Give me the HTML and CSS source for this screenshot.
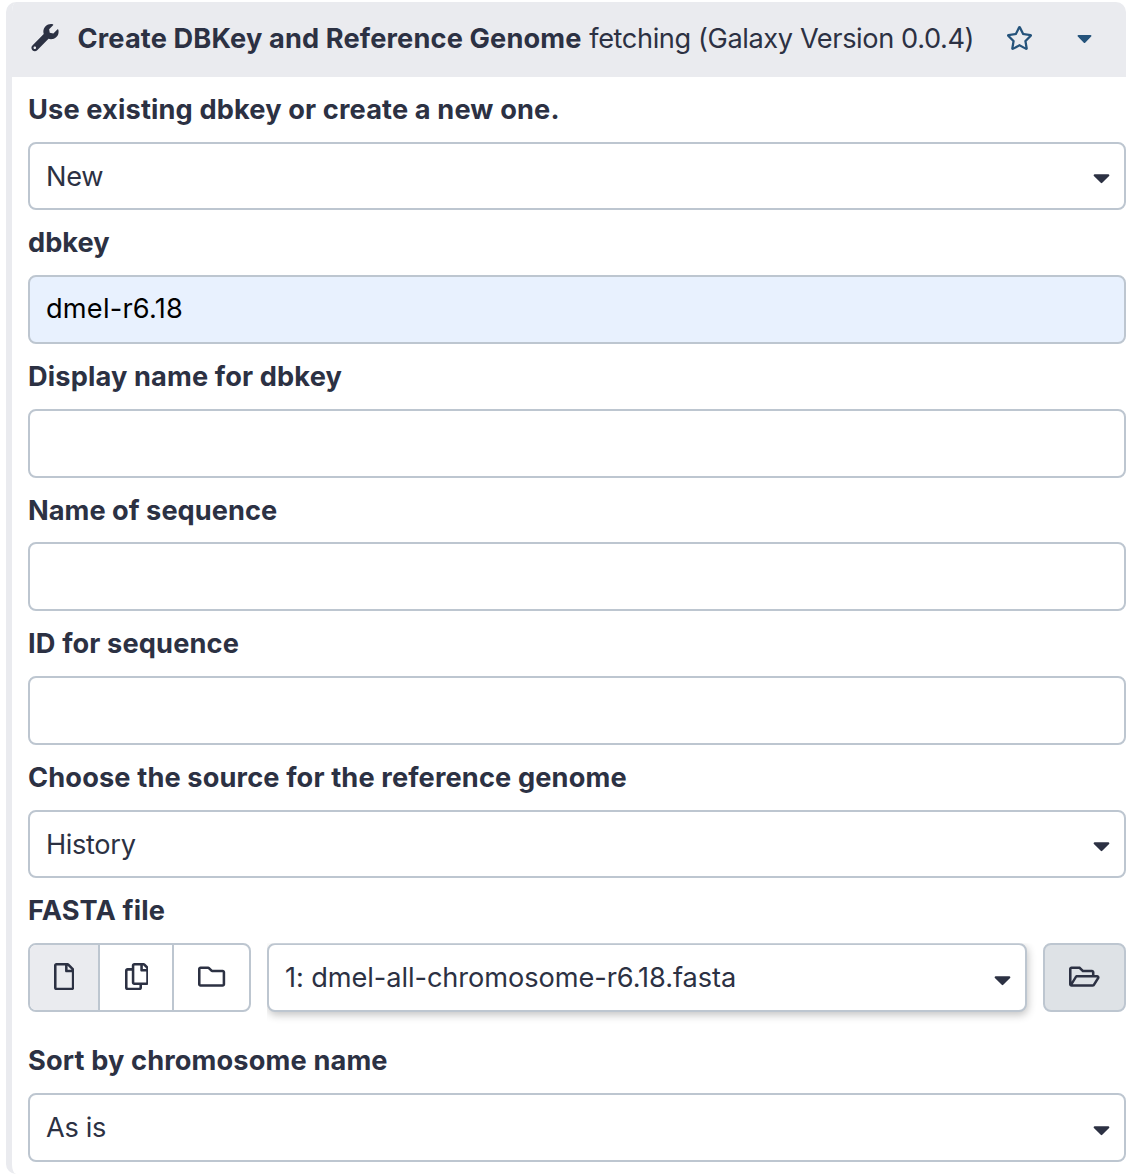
FILE: index.html
```html
<!DOCTYPE html>
<html lang="en">
<head>
<meta charset="utf-8">
<title>Create DBKey and Reference Genome</title>
<link rel="stylesheet" href="styles.css">
</head>
<body>
<svg class="sprite" aria-hidden="true">
  <symbol id="caret" viewBox="0 0 320 512"><path d="M31.3 192h257.3c17.8 0 26.7 21.5 14.1 34.1L174.1 354.8c-7.8 7.8-20.5 7.8-28.3 0L17.2 226.1C4.6 213.5 13.7 192 31.3 192z"/></symbol>
</svg>
<main class="tool">
  <header class="tool-header">
    <svg class="icon wrench" viewBox="0 0 512 512"><path d="M507.73 109.1c-2.24-9.03-13.54-12.09-20.12-5.51l-74.36 74.36-67.88-11.31-11.31-67.88 74.36-74.36c6.62-6.62 3.43-17.9-5.66-20.16-47.38-11.74-99.55.91-136.58 37.93-39.64 39.64-50.55 97.1-34.05 147.2L18.74 402.76c-24.99 24.99-24.99 65.51 0 90.5 24.99 24.99 65.51 24.99 90.5 0l213.21-213.21c50.12 16.71 107.47 5.68 147.37-34.22 37.07-37.07 49.7-89.32 37.91-136.73zM64 472c-13.25 0-24-10.75-24-24 0-13.26 10.75-24 24-24s24 10.74 24 24c0 13.25-10.75 24-24 24z"/></svg>
    <h1 class="tool-title"><b>Create DBKey and Reference Genome</b> <span class="tool-desc">fetching (Galaxy Version 0.0.4)</span></h1>
    <div class="tool-actions">
      <svg class="star" viewBox="0 0 576 512"><path d="M528.1 171.5L382 150.2 316.7 17.8c-11.7-23.6-45.6-23.9-57.4 0L194 150.2 47.9 171.5c-26.2 3.8-36.7 36.1-17.7 54.6l105.7 103-25 145.5c-4.5 26.3 23.2 46 46.4 33.7L288 439.6l130.7 68.7c23.2 12.2 50.9-7.4 46.4-33.7l-25-145.5 105.7-103c19-18.5 8.5-50.8-17.7-54.6zM388.6 312.3l23.7 138.4L288 385.4l-124.3 65.3 23.7-138.4-100.6-98 139-20.2 62.2-126 62.2 126 139 20.2-100.6 98z"/></svg>
      <svg class="menu-caret"><use href="#caret"/></svg>
    </div>
  </header>
  <form class="tool-form">
    <div class="field">
      <div class="label">Use existing dbkey or create a new one.</div>
      <div class="control select"><span>New</span><svg class="caret"><use href="#caret"/></svg></div>
    </div>
    <div class="field">
      <label class="label tight" for="dbkey">dbkey</label>
      <input class="control filled" id="dbkey" type="text" value="dmel-r6.18">
    </div>
    <div class="field">
      <label class="label" for="display">Display name for dbkey</label>
      <input class="control" id="display" type="text">
    </div>
    <div class="field">
      <label class="label tight" for="seq-name">Name of sequence</label>
      <input class="control" id="seq-name" type="text">
    </div>
    <div class="field">
      <label class="label" for="seq-id">ID for sequence</label>
      <input class="control" id="seq-id" type="text">
    </div>
    <div class="field">
      <div class="label">Choose the source for the reference genome</div>
      <div class="control select"><span>History</span><svg class="caret"><use href="#caret"/></svg></div>
    </div>
    <div class="field field-data">
      <div class="label">FASTA file</div>
      <div class="data-row">
        <div class="button-group">
          <div class="mode single active"><svg class="icon" viewBox="0 0 384 512"><path d="M369.9 97.9L286 14C277 5 264.8-.1 252.1-.1H48C21.5 0 0 21.5 0 48v416c0 26.5 21.5 48 48 48h288c26.5 0 48-21.5 48-48V131.9c0-12.7-5.1-25-14.1-34zM332.1 128H256V51.9l76.1 76.1zM48 464V48h160v104c0 13.3 10.7 24 24 24h104v288H48z"/></svg></div>
          <div class="mode multiple"><svg class="icon" viewBox="0 0 448 512"><path d="M433.941 65.941l-51.882-51.882A48 48 0 0 0 348.118 0H176c-26.51 0-48 21.49-48 48v48H48c-26.51 0-48 21.49-48 48v320c0 26.51 21.49 48 48 48h224c26.51 0 48-21.49 48-48v-48h80c26.51 0 48-21.49 48-48V99.882a48 48 0 0 0-14.059-33.941zM266 464H54a6 6 0 0 1-6-6V150a6 6 0 0 1 6-6h74v224c0 26.51 21.49 48 48 48h96v42a6 6 0 0 1-6 6zm128-96H182a6 6 0 0 1-6-6V54a6 6 0 0 1 6-6h106v88c0 13.255 10.745 24 24 24h88v202a6 6 0 0 1-6 6zm6-256h-64V48h9.632c1.591 0 3.117.632 4.243 1.757l48.368 48.368a6 6 0 0 1 1.757 4.243V112z"/></svg></div>
          <div class="mode collection"><svg class="icon" viewBox="0 0 512 512"><path d="M464 128H272l-54.63-54.63c-6-6-14.14-9.37-22.63-9.37H48C21.49 64 0 85.49 0 112v288c0 26.51 21.49 48 48 48h416c26.51 0 48-21.49 48-48V176c0-26.51-21.49-48-48-48zm0 272H48V112h140.12l54.63 54.63c6 6 14.14 9.37 22.63 9.37H464v224z"/></svg></div>
        </div>
        <div class="select-wrap">
          <div class="control select raised"><span>1: dmel-all-chromosome-r6.18.fasta</span><svg class="caret"><use href="#caret"/></svg></div>
        </div>
        <div class="browse"><svg class="icon" viewBox="0 0 576 512"><path d="M527.9 224H480v-48c0-26.5-21.5-48-48-48H272l-64-64H48C21.5 64 0 85.5 0 112v288c0 26.5 21.5 48 48 48h400c16.5 0 31.9-8.5 40.7-22.6l79.9-128c20-31.9-3-73.4-40.7-73.4zM48 118c0-3.3 2.7-6 6-6h134.1l64 64H426c3.3 0 6 2.7 6 6v42H152c-16.8 0-32.4 8.8-41.1 23.2L48 351.4zm400 282H72l77.2-128H528z"/></svg></div>
      </div>
    </div>
    <div class="field">
      <div class="label">Sort by chromosome name</div>
      <div class="control select"><span>As is</span><svg class="caret"><use href="#caret"/></svg></div>
    </div>
  </form>
</main>
</body>
</html>
```
FILE: styles.css
```css
* { box-sizing: border-box; }

body {
  margin: 0;
  padding: 2px 10px 0 6px;
  background: #fff;
  color: #2c3143;
  font-family: Inter, "Liberation Sans", sans-serif;
  font-size: 27.2px;
  line-height: 40.8px;
}

.sprite { display: none; }
svg { display: block; fill: currentColor; flex: none; }
.icon { height: 27.2px; }

.tool {
  height: 1172px;
  border-left: 6px solid #eaebef;
  border-radius: 10px;
  overflow: hidden;
}

.tool-header {
  display: flex;
  align-items: center;
  height: 75px;
  padding: 0 34px 3px 19px;
  background: #eaebef;
}

.wrench { width: 28px; }

.tool-title {
  margin: 0 0 0 18.5px;
  padding-top: 2px;
  font-size: inherit;
  font-weight: 400;
  white-space: nowrap;
}

.tool-title b, .label { font-weight: 700; letter-spacing: 0.14px; }
.tool-desc { letter-spacing: -0.4px; }

.tool-actions {
  display: flex;
  align-items: center;
  gap: 44px;
  margin-left: auto;
  margin-top: -1px;
  color: #25537b;
}

.star { width: 27px; height: 24px; }
.menu-caret { width: 15px; height: 24px; }

.tool-form { padding-left: 16px; }

.label {
  display: block;
  height: 64.8px;
  padding-top: 1px;
  line-height: 64.8px;
  white-space: nowrap;
}

.label.tight { letter-spacing: 0.03px; }

.field:first-child .label { height: 64.6px; }
.field-data { margin-bottom: 16.2px; }

.control {
  display: block;
  width: 100%;
  height: 68.8px;
  margin: 0;
  padding: 0 16px;
  border: 2px solid #bdc6d0;
  border-radius: 8px;
  background: #fff;
  color: inherit;
  font: inherit;
  outline: none;
}

.filled {
  padding-bottom: 2px;
  background: #e8f1fe;
  color: #000;
  letter-spacing: 0.2px;
}

.select {
  display: flex;
  align-items: center;
  justify-content: space-between;
  padding-top: 2px;
  padding-right: 14px;
  letter-spacing: -0.35px;
}

.caret { width: 17px; height: 27.2px; margin-top: 1.6px; }

.data-row { display: flex; gap: 16px; }

.button-group {
  display: flex;
  width: 223px;
  height: 68.8px;
  border: 2px solid #bdc6d0;
  border-radius: 8px;
  overflow: hidden;
}

.mode, .browse {
  display: flex;
  align-items: center;
  justify-content: center;
  padding-bottom: 1.6px;
}

.mode + .mode { border-left: 2px solid #bdc6d0; }
.single { width: 68px; }
.multiple { width: 74px; padding-left: 1px; }
.collection { flex: 1; padding-left: 1px; }
.active { background: #eaebef; }

/* keeps the menu shadow off the top and left sides */
.select-wrap {
  flex: 1;
  clip-path: inset(0 -16px -20px 0);
}

.raised {
  box-shadow: 1px 3px 9px rgba(0, 0, 0, 0.24);
  letter-spacing: -0.08px;
}

.browse {
  width: 83px;
  height: 68.8px;
  border: 2px solid #bdc6d0;
  border-radius: 8px;
  background: #dee2e6;
}
```
